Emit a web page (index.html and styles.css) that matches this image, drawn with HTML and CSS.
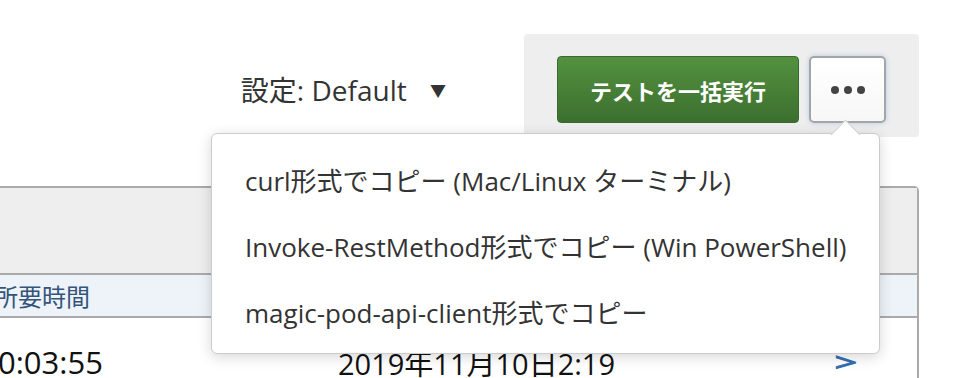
FILE: index.html
```html
<!DOCTYPE html>
<html lang="ja">
<head>
    <meta charset="UTF-8">
    <meta name="viewport" content="width=device-width, initial-scale=1.0">
    <title>Batch Run</title>
    <link rel="stylesheet" href="styles.css">
</head>
<body>

<div class="page">
    <!-- Toolbar -->
    <div class="toolbar">
        <div class="settings">設定: Default <span class="caret">▼</span></div>
        <div class="actions">
            <button class="run-all">テストを一括実行</button>
            <div class="more-wrap">
                <button class="more"><span></span><span></span><span></span></button>
                <!-- Copy menu -->
                <div class="menu">
                    <div class="menu-item">curl形式でコピー (Mac/Linux ターミナル)</div>
                    <div class="menu-item">Invoke-RestMethod形式でコピー (Win PowerShell)</div>
                    <div class="menu-item">magic-pod-api-client形式でコピー</div>
                </div>
            </div>
        </div>
    </div>

    <!-- Results table -->
    <div class="results">
        <div class="results-head"></div>
        <div class="results-labels">
            <div class="col-duration">所要時間</div>
        </div>
        <div class="results-row">
            <div class="col-duration duration">0:03:55</div>
            <div class="col-started">2019年11月10日2:19</div>
            <div class="col-go"><span>&gt;</span></div>
        </div>
    </div>
</div>

</body>
</html>
```

FILE: styles.css
```css
body {
    margin: 0;
    font-family: "Open Sans", "Noto Sans CJK JP", sans-serif;
    background-color: #fff;
    color: #222;
    overflow: hidden;
}
.page {
    width: 954px;
    height: 378px;
    overflow: hidden;
}

/* toolbar */
.toolbar {
    display: flex;
    justify-content: flex-end;
    align-items: center;
    padding: 34px 35px 0 0;
}
.settings {
    font-size: 28px;
    color: #333;
    margin-right: 78px;
    margin-top: 6px;
    white-space: nowrap;
}
.caret {
    font-size: 16px;
    margin-left: 16px;
    vertical-align: 4px;
}
.actions {
    display: flex;
    gap: 10px;
    padding: 22px 33px 14px 33px;
    background-color: #eee;
    border-radius: 4px;
}
.run-all {
    width: 242px;
    height: 67px;
    font-family: "Noto Sans CJK JP", sans-serif;
    font-size: 22px;
    font-weight: bold;
    color: #fff;
    background: linear-gradient(#53913f, #3c6f2f);
    border: 1px solid #3a6a2e;
    border-radius: 4px;
}
.more-wrap {
    position: relative;
}
.more {
    width: 77px;
    height: 67px;
    display: flex;
    justify-content: center;
    align-items: center;
    gap: 5px;
    background: linear-gradient(#fff, #f7f7f7);
    border: 2px solid #a5a5a5;
    border-radius: 5px;
    box-shadow: 0 0 5px rgba(102, 160, 220, 0.45);
}
.more span {
    width: 8px;
    height: 8px;
    border-radius: 50%;
    background-color: #444;
}

/* dropdown */
.menu {
    position: absolute;
    top: calc(100% + 10px);
    right: 6px;
    width: 667px;
    padding: 14px 0 7px;
    background-color: #fff;
    border: 1px solid #ccc;
    border-radius: 6px;
    box-shadow: 0 3px 14px rgba(0, 0, 0, 0.16);
    z-index: 10;
}
.menu::before {
    content: "";
    position: absolute;
    top: -10px;
    right: 23px;
    width: 20px;
    height: 20px;
    background-color: #fff;
    border-left: 1px solid #ccc;
    border-top: 1px solid #ccc;
    transform: rotate(45deg);
}
.menu-item {
    height: 66px;
    line-height: 66px;
    padding-left: 33px;
    font-size: 26px;
    color: #333;
    white-space: nowrap;
}

/* results */
.results {
    margin: 49px 35px 0 -40px;
    border: 2px solid #aaa;
    border-radius: 0 5px 0 0;
}
.results-head {
    height: 85px;
    background-color: #eee;
    border-bottom: 2px solid #aaa;
}
.results-labels {
    display: flex;
    height: 41px;
    align-items: center;
    background-color: #eef3f9;
    border-bottom: 2px solid #aaa;
    font-size: 24px;
    color: #34557a;
}
.results-row {
    display: flex;
    align-items: center;
    height: 88px;
    font-size: 29px;
    color: #111;
}
.col-duration {
    width: 344px;
    padding-left: 32px;
    white-space: nowrap;
}
.duration {
    padding-left: 36px;
    width: 340px;
    font-size: 31px;
}
.col-started {
    flex: 1;
    white-space: nowrap;
}
.col-go {
    width: 83px;
    font-size: 26px;
    font-weight: bold;
    color: #3470b0;
}
.col-go span {
    display: inline-block;
    transform: scale(1.6, 1);
    transform-origin: left center;
}
```
